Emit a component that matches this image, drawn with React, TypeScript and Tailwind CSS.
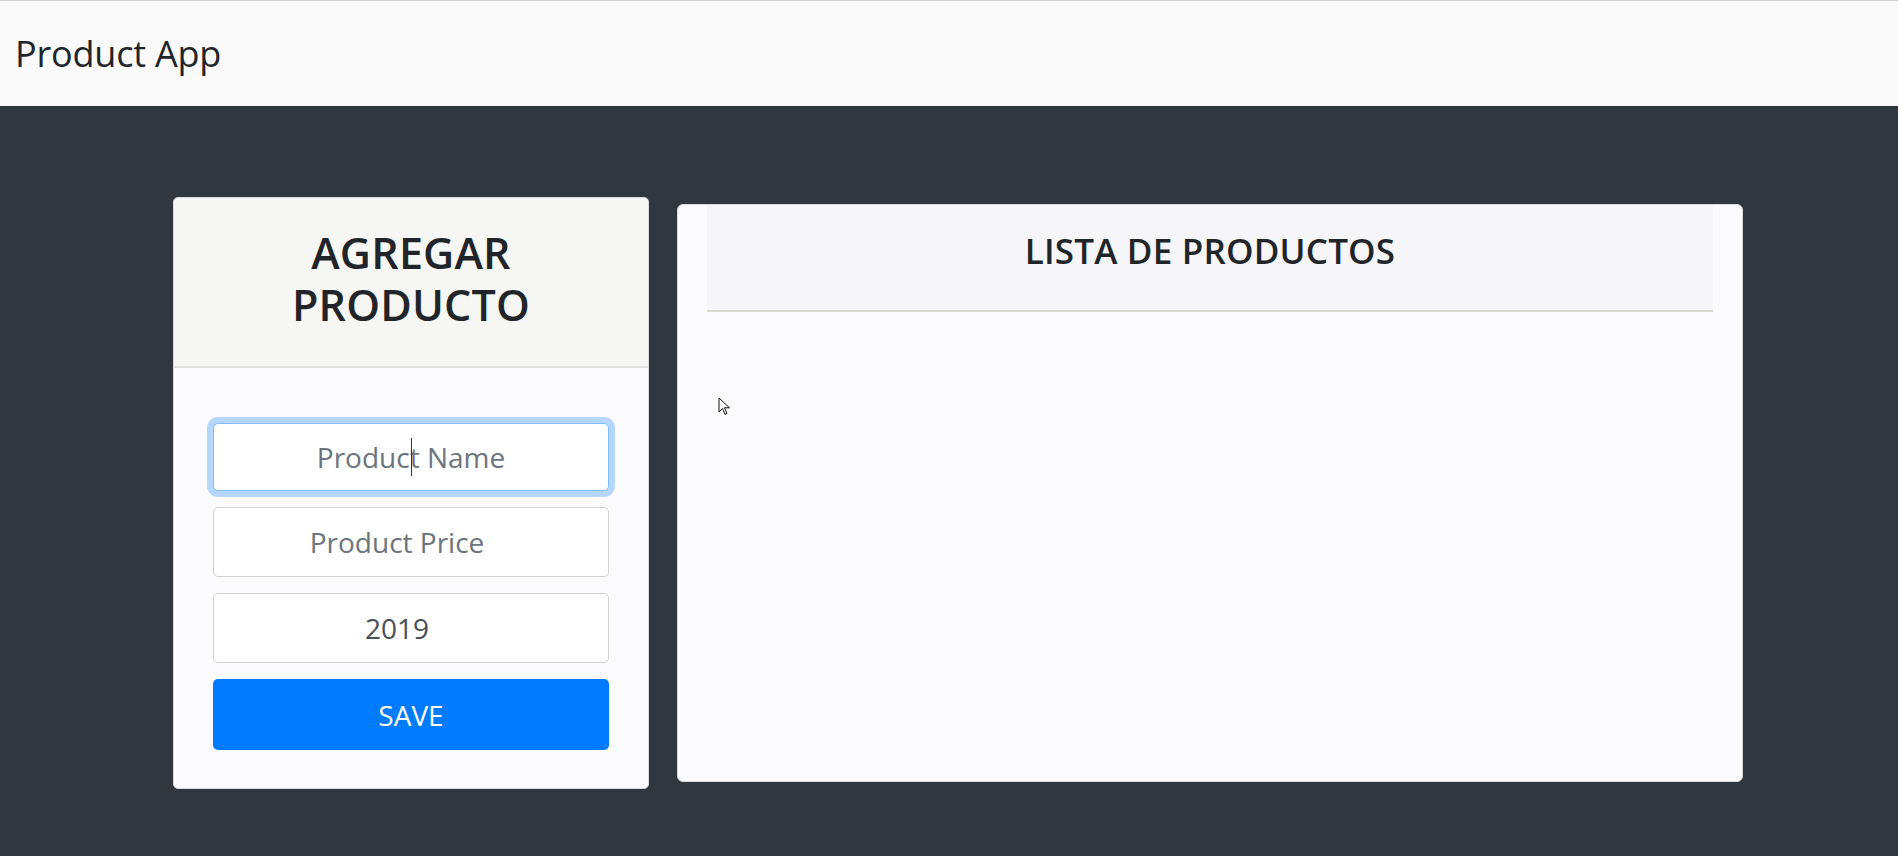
import React from "react";

export default function App() {
  const font = { fontFamily: '"Open Sans", "Noto Sans", sans-serif' };
  return (
    <div className="w-[1898px] h-[856px] flex flex-col bg-[#30373e] overflow-hidden" style={font}>
      <nav className="h-[106px] shrink-0 bg-[#fafafa] border-t border-[#cfcfcf] flex items-center pl-[15px]">
        <span className="text-[36px] text-[#212529] tracking-[-0.2px]">Product App</span>
      </nav>
      <main className="flex items-start pl-[173px] pt-[91px] gap-[28px]">
        <section className="w-[476px] h-[592px] bg-[#fbfbfd] border border-[#d9d9d9] rounded-[5px] flex flex-col overflow-hidden">
          <header className="h-[170px] shrink-0 bg-[#f6f6f4] border-b-2 border-[#dedede] flex flex-col items-center justify-center pb-[6px]">
            <span className="block text-center text-[43px] leading-[52px] font-semibold text-[#212529] tracking-[0.2px]">AGREGAR</span>
            <span className="block text-center text-[43px] leading-[52px] font-semibold text-[#212529] tracking-[0.2px]">PRODUCTO</span>
          </header>
          <form className="flex flex-col px-[39px] pt-[55px] gap-[16px]">
            <div className="h-[68px] rounded-[5px] border border-[#80bdff] bg-white shadow-[0_0_0_6px_rgba(0,123,255,0.28)] flex items-center justify-center relative">
              <span className="text-[28px] text-[#6c757d]">Product Name</span>
              <span className="absolute left-[197px] top-[14px] w-[1px] h-[38px] bg-[#333]" />
            </div>
            <div className="h-[70px] rounded-[5px] border border-[#cfd2d5] bg-white flex items-center justify-center pr-[28px]">
              <span className="text-[28px] text-[#6c757d]">Product Price</span>
            </div>
            <div className="h-[70px] rounded-[5px] border border-[#cfd2d5] bg-white flex items-center justify-center pr-[28px]">
              <span className="text-[28px] text-[#495057]">2019</span>
            </div>
            <button type="button" className="h-[71px] rounded-[5px] bg-[#007bff] text-white text-[28px] flex items-center justify-center">
              SAVE
            </button>
          </form>
        </section>
        <section className="mt-[7px] w-[1066px] h-[578px] bg-[#fbfbfd] border border-[#d9d9d9] rounded-[6px] px-[29px] relative">
          <header className="h-[107px] bg-[#f6f6f8] border-b-2 border-[#d9d9d4] flex items-center justify-center pb-[12px]">
            <h2 className="text-[35px] font-semibold text-[#212529] tracking-[0.2px]">LISTA DE PRODUCTOS</h2>
          </header>
          <svg className="absolute left-[40px] top-[192px]" width="14" height="20" viewBox="0 0 14 20">
            <path d="M1 1 L1 15 L4.5 11.5 L7 17.5 L9 16.5 L6.5 10.8 L11.5 10.8 Z" fill="white" stroke="#111" strokeWidth="1" strokeLinejoin="round" />
          </svg>
        </section>
      </main>
    </div>
  );
}
